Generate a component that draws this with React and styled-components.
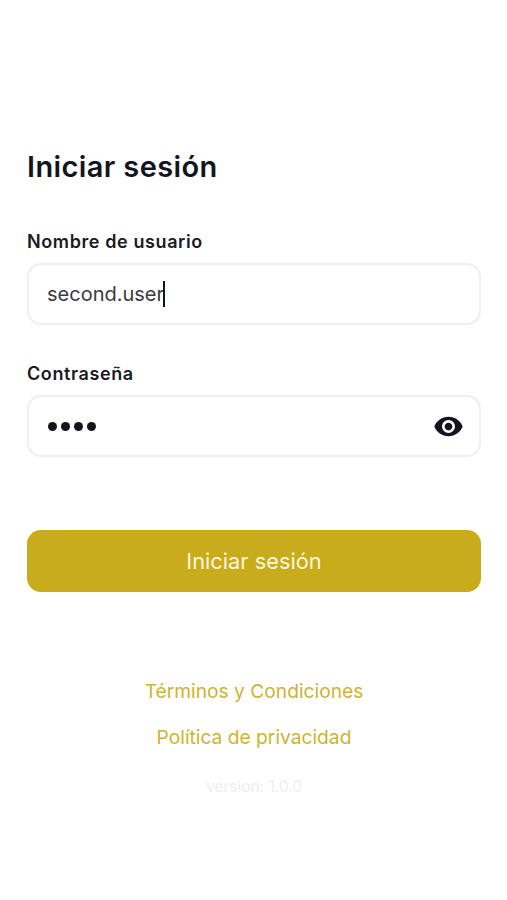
import React from "react";
import styled, { createGlobalStyle } from "styled-components";
import { MdVisibility } from "react-icons/md";

const GlobalStyle = createGlobalStyle`
  html, body {
    margin: 0;
    padding: 0;
    background: #fff;
  }
  * {
    box-sizing: border-box;
  }
`;

const App = () => {
  return (
    <>
      <GlobalStyle />
      <Page>
        <Title>Iniciar sesión</Title>

        <Label>Nombre de usuario</Label>
        <Field>
          <Value>second.user</Value>
          <Caret />
        </Field>

        <Label $second>Contraseña</Label>
        <Field>
          <Dots>
            <Dot />
            <Dot />
            <Dot />
            <Dot />
          </Dots>
          <EyeButton aria-label="Mostrar contraseña">
            <MdVisibility size={31} />
          </EyeButton>
        </Field>

        <SubmitButton>Iniciar sesión</SubmitButton>

        <Footer>
          <FooterLink>Términos y Condiciones</FooterLink>
          <FooterLink>Política de privacidad</FooterLink>
          <Version>version: 1.0.0</Version>
        </Footer>
      </Page>
    </>
  );
};

export default App;

// Styled components
const Page = styled.div`
  display: flex;
  flex-direction: column;
  width: 507px;
  height: 900px;
  padding: 148px 26px 0 27px;
  background: #fff;
  font-family: Inter, "Liberation Sans", sans-serif;
`;

const Title = styled.h1`
  margin: 0 0 45px;
  font-size: 29px;
  line-height: 38px;
  font-weight: 600;
  letter-spacing: 0.38px;
  color: #14141f;
`;

const Label = styled.label`
  margin: ${(p) => (p.$second ? "38px" : "0")} 0 10px;
  font-size: 18px;
  line-height: 22px;
  font-weight: 600;
  letter-spacing: 0.6px;
  color: #1a1a24;
`;

const Field = styled.div`
  display: flex;
  align-items: center;
  height: 62px;
  padding: 0 15px 0 18px;
  border: 2px solid #efeff0;
  border-radius: 14px;
  background: #fff;
`;

const Value = styled.span`
  font-size: 20px;
  color: #3a3a40;
`;

const Caret = styled.span`
  width: 2px;
  height: 26px;
  margin-left: -1px;
  background: #14141f;
`;

const Dots = styled.div`
  display: flex;
  flex: 1;
  gap: 4px;
  padding-left: 1px;
`;

const Dot = styled.span`
  width: 9px;
  height: 9px;
  border-radius: 50%;
  background: #14141f;
`;

const EyeButton = styled.button`
  display: flex;
  padding: 0;
  border: none;
  background: none;
  color: #14141f;
  cursor: pointer;
`;

const SubmitButton = styled.button`
  height: 62px;
  margin-top: 73px;
  border: none;
  border-radius: 14px;
  background: #c8ac1b;
  color: #fbf6dc;
  font-family: inherit;
  font-size: 21.8px;
  cursor: pointer;
`;

const Footer = styled.div`
  display: flex;
  flex-direction: column;
  align-items: center;
  margin-top: 86px;
`;

const FooterLink = styled.a`
  margin-bottom: 20px;
  font-size: 19.2px;
  line-height: 26px;
  color: #cdb431;
  cursor: pointer;
`;

const Version = styled.span`
  margin-top: 6px;
  font-size: 15.5px;
  line-height: 22px;
  color: #eeeeee;
`;
